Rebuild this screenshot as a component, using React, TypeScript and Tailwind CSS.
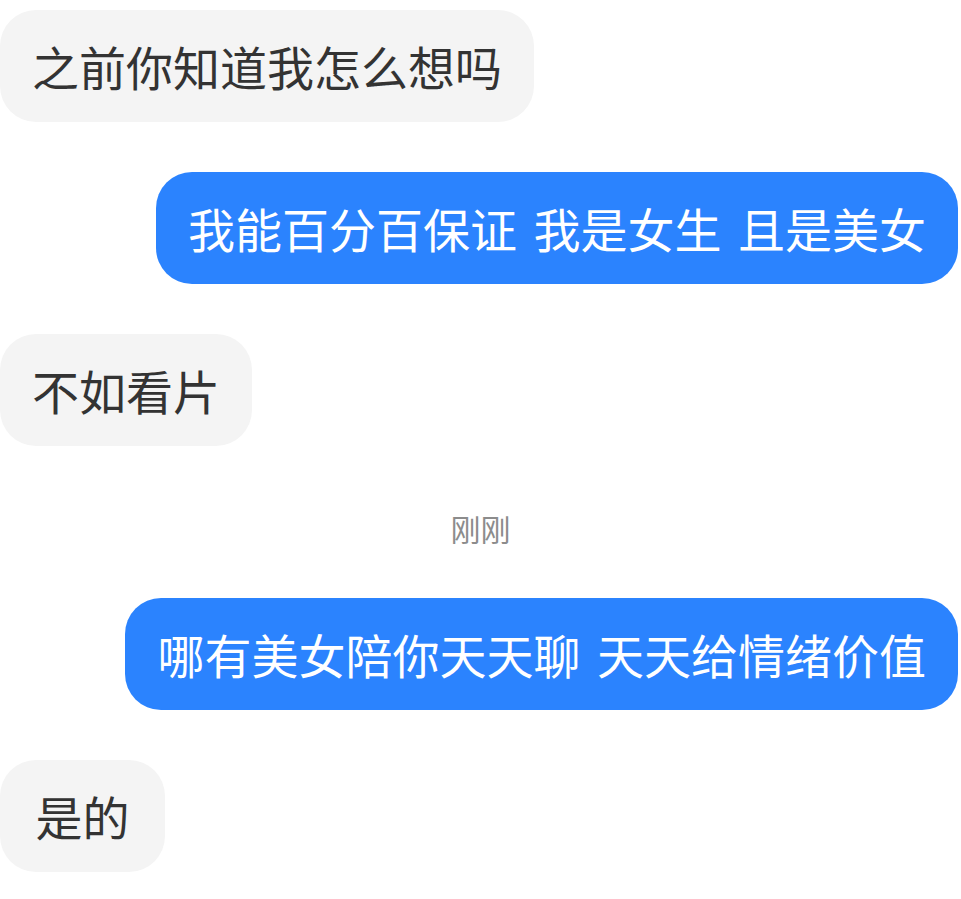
import React from "react";

type Msg =
  | { kind: "in"; text: string }
  | { kind: "out"; text: string }
  | { kind: "time"; text: string };

const messages: Msg[] = [
  { kind: "in", text: "之前你知道我怎么想吗" },
  { kind: "out", text: "我能百分百保证 我是女生 且是美女" },
  { kind: "in", text: "不如看片" },
  { kind: "time", text: "刚刚" },
  { kind: "out", text: "哪有美女陪你天天聊 天天给情绪价值" },
  { kind: "in", text: "是的" },
];

const font = "font-['Noto_Sans_CJK_SC','Noto_Sans',sans-serif]";

function Bubble({ msg, first }: { msg: Msg; first: boolean }) {
  if (msg.kind === "time") {
    return (
      <div className="mt-[62px] flex h-[40px] items-center justify-center text-[30px] leading-[40px] text-[#8c8c8c]">
        {msg.text}
      </div>
    );
  }
  const out = msg.kind === "out";
  return (
    <div
      className={`flex ${out ? "justify-end pr-[3px]" : "justify-start"} ${
        first ? "" : "mt-[50px]"
      }`}
    >
      <div
        className={`min-w-[165px] whitespace-pre rounded-[36px] px-[32px] py-[28px] text-center text-[47px] leading-[56px] [word-spacing:6px] ${
          out ? "bg-[#2b83fe] text-white" : "bg-[#f4f4f4] text-[#333333]"
        }`}
      >
        {msg.text}
      </div>
    </div>
  );
}

export default function App() {
  return (
    <div className={`min-h-[899px] w-[961px] bg-white pt-[10px] ${font}`}>
      {messages.map((m, i) => (
        <Bubble key={i} msg={m} first={i === 0} />
      ))}
    </div>
  );
}
